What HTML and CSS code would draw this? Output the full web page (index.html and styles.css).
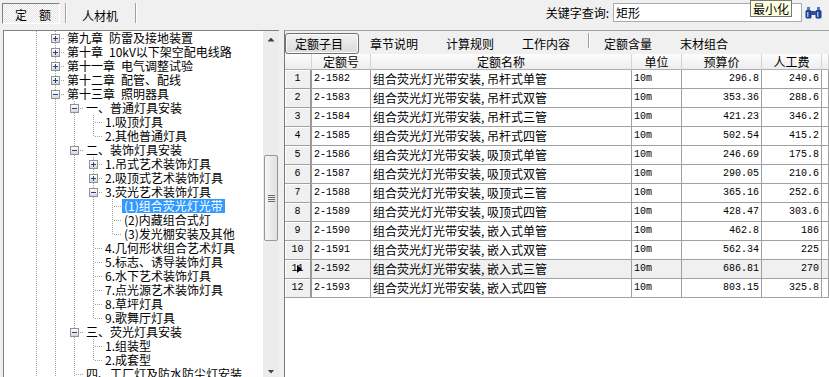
FILE: index.html
```html
<!DOCTYPE html>
<html lang="zh-CN">
<head>
  <meta charset="UTF-8">
  <meta name="viewport" content="width=device-width, initial-scale=1.0">
  <title>定额查询</title>
  <link rel="stylesheet" href="styles.css">
</head>
<body>

  <div class="toolbar">
    <div class="mode-tab">定　额</div>
    <div class="mode-sep"></div>
    <div class="mode-link">人材机</div>
    <div class="mode-sep last"></div>

    <label class="search-label" for="keyword">关键字查询:</label>
    <input class="search-box" id="keyword" type="text" value="矩形">
    <svg class="find-icon" width="17" height="12" viewBox="0 0 17 12">
      <path d="M2 0h3v3H2zM12 0h3v3h-3z" fill="#5577c4"/>
      <rect x="0.5" y="3" width="6" height="8.5" rx="1.5" fill="#21428f"/>
      <rect x="10.5" y="3" width="6" height="8.5" rx="1.5" fill="#21428f"/>
      <rect x="6" y="4" width="5" height="4" fill="#2d4f9e"/>
      <rect x="2" y="5" width="1.5" height="5" fill="#9db8ee"/>
      <rect x="12" y="5" width="1.5" height="5" fill="#9db8ee"/>
    </svg>
    <div class="tooltip">最小化</div>
  </div>

  <div class="main">
    <div class="tree-panel">
      <div class="tree">
        <div class="node"><i class="g v"></i><i class="g t"><b class="box plus"></b></i><span class="label">第九章&ensp;防雷及接地装置</span></div>
        <div class="node"><i class="g v"></i><i class="g t"><b class="box plus"></b></i><span class="label">第十章&ensp;10kV以下架空配电线路</span></div>
        <div class="node"><i class="g v"></i><i class="g t"><b class="box plus"></b></i><span class="label">第十一章&ensp;电气调整试验</span></div>
        <div class="node"><i class="g v"></i><i class="g t"><b class="box plus"></b></i><span class="label">第十二章&ensp;配管、配线</span></div>
        <div class="node"><i class="g v"></i><i class="g t"><b class="box"></b></i><span class="label">第十三章&ensp;照明器具</span></div>
        <div class="node"><i class="g v"></i><i class="g v"></i><i class="g t"><b class="box"></b></i><span class="label">一、普通灯具安装</span></div>
        <div class="node"><i class="g v"></i><i class="g v"></i><i class="g v"></i><i class="g t"></i><span class="label">1.吸顶灯具</span></div>
        <div class="node"><i class="g v"></i><i class="g v"></i><i class="g v"></i><i class="g e"></i><span class="label">2.其他普通灯具</span></div>
        <div class="node"><i class="g v"></i><i class="g v"></i><i class="g t"><b class="box"></b></i><span class="label">二、装饰灯具安装</span></div>
        <div class="node"><i class="g v"></i><i class="g v"></i><i class="g v"></i><i class="g t"><b class="box plus"></b></i><span class="label">1.吊式艺术装饰灯具</span></div>
        <div class="node"><i class="g v"></i><i class="g v"></i><i class="g v"></i><i class="g t"><b class="box plus"></b></i><span class="label">2.吸顶式艺术装饰灯具</span></div>
        <div class="node"><i class="g v"></i><i class="g v"></i><i class="g v"></i><i class="g t"><b class="box"></b></i><span class="label">3.荧光艺术装饰灯具</span></div>
        <div class="node"><i class="g v"></i><i class="g v"></i><i class="g v"></i><i class="g v"></i><i class="g t"></i><span class="label sel">(1)组合荧光灯光带</span></div>
        <div class="node"><i class="g v"></i><i class="g v"></i><i class="g v"></i><i class="g v"></i><i class="g t"></i><span class="label">(2)内藏组合式灯</span></div>
        <div class="node"><i class="g v"></i><i class="g v"></i><i class="g v"></i><i class="g v"></i><i class="g e"></i><span class="label">(3)发光棚安装及其他</span></div>
        <div class="node"><i class="g v"></i><i class="g v"></i><i class="g v"></i><i class="g t"></i><span class="label">4.几何形状组合艺术灯具</span></div>
        <div class="node"><i class="g v"></i><i class="g v"></i><i class="g v"></i><i class="g t"></i><span class="label">5.标志、诱导装饰灯具</span></div>
        <div class="node"><i class="g v"></i><i class="g v"></i><i class="g v"></i><i class="g t"></i><span class="label">6.水下艺术装饰灯具</span></div>
        <div class="node"><i class="g v"></i><i class="g v"></i><i class="g v"></i><i class="g t"></i><span class="label">7.点光源艺术装饰灯具</span></div>
        <div class="node"><i class="g v"></i><i class="g v"></i><i class="g v"></i><i class="g t"></i><span class="label">8.草坪灯具</span></div>
        <div class="node"><i class="g v"></i><i class="g v"></i><i class="g v"></i><i class="g e"></i><span class="label">9.歌舞厅灯具</span></div>
        <div class="node"><i class="g v"></i><i class="g v"></i><i class="g t"><b class="box"></b></i><span class="label">三、荧光灯具安装</span></div>
        <div class="node"><i class="g v"></i><i class="g v"></i><i class="g v"></i><i class="g t"></i><span class="label">1.组装型</span></div>
        <div class="node"><i class="g v"></i><i class="g v"></i><i class="g v"></i><i class="g e"></i><span class="label">2.成套型</span></div>
        <div class="node"><i class="g v"></i><i class="g v"></i><i class="g t"></i><span class="label">四、工厂灯及防水防尘灯安装</span></div>
      </div>

      <div class="vscroll">
        <div class="sb-btn"><span class="tri up"></span></div>
        <div class="sb-track">
          <div class="sb-thumb"><span class="sb-grip"></span></div>
        </div>
        <div class="sb-btn"><span class="tri down"></span></div>
      </div>
    </div>

    <div class="grid-panel">
      <div class="subtabs">
        <div class="subtab on">定额子目</div>
        <div class="subtab">章节说明</div>
        <div class="subtab">计算规则</div>
        <div class="subtab">工作内容</div>
        <div class="subtab-sep"></div>
        <div class="subtab">定额含量</div>
        <div class="subtab">末材组合</div>
      </div>

      <div class="grid">
        <div class="grid-head">
          <div></div><div>定额号</div><div>定额名称</div><div>单位</div><div>预算价</div><div>人工费</div><div></div>
        </div>
        <div class="grid-row"><div class="rn">1</div><div class="mono">2-1582</div><div>组合荧光灯光带安装, 吊杆式单管</div><div class="mono">10m</div><div class="mono num">296.8</div><div class="mono num">240.6</div><div></div></div>
        <div class="grid-row"><div class="rn">2</div><div class="mono">2-1583</div><div>组合荧光灯光带安装, 吊杆式双管</div><div class="mono">10m</div><div class="mono num">353.36</div><div class="mono num">288.6</div><div></div></div>
        <div class="grid-row"><div class="rn">3</div><div class="mono">2-1584</div><div>组合荧光灯光带安装, 吊杆式三管</div><div class="mono">10m</div><div class="mono num">421.23</div><div class="mono num">346.2</div><div></div></div>
        <div class="grid-row"><div class="rn">4</div><div class="mono">2-1585</div><div>组合荧光灯光带安装, 吊杆式四管</div><div class="mono">10m</div><div class="mono num">502.54</div><div class="mono num">415.2</div><div></div></div>
        <div class="grid-row"><div class="rn">5</div><div class="mono">2-1586</div><div>组合荧光灯光带安装, 吸顶式单管</div><div class="mono">10m</div><div class="mono num">246.69</div><div class="mono num">175.8</div><div></div></div>
        <div class="grid-row"><div class="rn">6</div><div class="mono">2-1587</div><div>组合荧光灯光带安装, 吸顶式双管</div><div class="mono">10m</div><div class="mono num">290.05</div><div class="mono num">210.6</div><div></div></div>
        <div class="grid-row"><div class="rn">7</div><div class="mono">2-1588</div><div>组合荧光灯光带安装, 吸顶式三管</div><div class="mono">10m</div><div class="mono num">365.16</div><div class="mono num">252.6</div><div></div></div>
        <div class="grid-row"><div class="rn">8</div><div class="mono">2-1589</div><div>组合荧光灯光带安装, 吸顶式四管</div><div class="mono">10m</div><div class="mono num">428.47</div><div class="mono num">303.6</div><div></div></div>
        <div class="grid-row"><div class="rn">9</div><div class="mono">2-1590</div><div>组合荧光灯光带安装, 嵌入式单管</div><div class="mono">10m</div><div class="mono num">462.8</div><div class="mono num">186</div><div></div></div>
        <div class="grid-row"><div class="rn">10</div><div class="mono">2-1591</div><div>组合荧光灯光带安装, 嵌入式双管</div><div class="mono">10m</div><div class="mono num">562.34</div><div class="mono num">225</div><div></div></div>
        <div class="grid-row current"><div class="rn mark">11</div><div class="mono">2-1592</div><div>组合荧光灯光带安装, 嵌入式三管</div><div class="mono">10m</div><div class="mono num">686.81</div><div class="mono num">270</div><div></div></div>
        <div class="grid-row"><div class="rn">12</div><div class="mono">2-1593</div><div>组合荧光灯光带安装, 嵌入式四管</div><div class="mono">10m</div><div class="mono num">803.15</div><div class="mono num">325.8</div><div></div></div>
      </div>
    </div>
  </div>

</body>
</html>
```

FILE: styles.css
```css
* {
  box-sizing: border-box;
}

html, body {
  height: 100%;
  overflow: hidden;
}

body {
  margin: 0;
  background: #f0f0f0;
  color: #000;
  font-family: "Noto Sans CJK SC", "Liberation Sans", sans-serif;
  font-size: 12px;
}

/* top bar */
.toolbar {
  position: relative;
  display: flex;
  align-items: flex-start;
  height: 30px;
  padding: 3px 7px 0 2px;
}

.mode-tab {
  width: 58px;
  height: 21px;
  padding: 2px 0 0 12px;
  line-height: 17px;
  border: 1px solid;
  border-color: #808080 #fff #fff #808080;
  background: repeating-conic-gradient(#fff 0 25%, #e4e4e4 0 50%) 0 0 / 2px 2px;
}

.mode-sep {
  width: 2px;
  height: 20px;
  margin-left: 5px;
  border-left: 1px solid #a0a0a0;
  border-right: 1px solid #fff;
}

.mode-sep.last {
  margin-left: 17px;
}

.mode-link {
  margin-left: 15px;
  padding-top: 2px;
  line-height: 21px;
}

.search-label {
  margin-left: auto;
  margin-right: 4px;
  line-height: 19px;
}

.search-box {
  width: 189px;
  height: 19px;
  margin: 0;
  padding: 0 2px;
  border: 1px solid #a5acb5;
  background: #fff;
  font: inherit;
  line-height: 17px;
  outline: none;
}

.find-icon {
  margin: 4px 0 0 3px;
}

.tooltip {
  position: absolute;
  left: 750px;
  top: 0;
  width: 42px;
  height: 17px;
  border: 1px solid #767676;
  background: #ffffe1;
  line-height: 15px;
  text-align: center;
}

/* panels */
.main {
  display: flex;
  height: 350px;
}

.tree-panel {
  display: flex;
  width: 276px;
  margin-left: 3px;
  border-top: 1px solid #828282;
  border-left: 1px solid #828282;
  background: #fff;
}

.tree {
  flex: 1;
  overflow: hidden;
  padding-left: 23px;
}

.node {
  display: flex;
  height: 14px;
  white-space: nowrap;
}

.g {
  flex: none;
  display: flex;
  justify-content: center;
  align-items: flex-start;
  width: 19px;
  height: 14px;
  background-repeat: no-repeat;
}

.g.v {
  background-image: repeating-linear-gradient(#a0a0a0 0 1px, transparent 1px 2px);
  background-position: 9px 0;
  background-size: 1px 100%;
}

.g.t {
  background-image: repeating-linear-gradient(#a0a0a0 0 1px, transparent 1px 2px),
                    repeating-linear-gradient(90deg, #a0a0a0 0 1px, transparent 1px 2px);
  background-position: 9px 0, 11px 7px;
  background-size: 1px 100%, 8px 1px;
}

.g.e {
  background-image: repeating-linear-gradient(#a0a0a0 0 1px, transparent 1px 2px),
                    repeating-linear-gradient(90deg, #a0a0a0 0 1px, transparent 1px 2px);
  background-position: 9px 0, 11px 7px;
  background-size: 1px 8px, 8px 1px;
}

.box {
  width: 9px;
  height: 9px;
  margin-top: 3px;
  border: 1px solid #919191;
  background: linear-gradient(#23418f, #23418f) center / 5px 1px no-repeat,
              linear-gradient(#fff, #d6d6d6);
}

.box.plus {
  background: linear-gradient(#23418f, #23418f) center / 5px 1px no-repeat,
              linear-gradient(#23418f, #23418f) center / 1px 5px no-repeat,
              linear-gradient(#fff, #d6d6d6);
}

.label {
  padding: 0 2px;
  line-height: 14px;
}

.label.sel {
  background: #3399ff;
  color: #fff;
}

/* fake scrollbar */
.vscroll {
  flex: none;
  display: flex;
  flex-direction: column;
  width: 16px;
  background: #ececec;
}

.sb-btn {
  flex: none;
  display: flex;
  justify-content: center;
  align-items: center;
  height: 17px;
}

.tri {
  width: 7px;
  height: 4px;
  background: #404040;
}

.tri.up {
  clip-path: polygon(50% 0, 100% 100%, 0 100%);
}

.tri.down {
  clip-path: polygon(0 0, 100% 0, 50% 100%);
}

.sb-track {
  flex: 1;
  padding-top: 107px;
}

.sb-thumb {
  display: flex;
  justify-content: center;
  align-items: center;
  height: 86px;
  margin: 0 1px;
  border: 1px solid #979797;
  border-radius: 2px;
  background: linear-gradient(90deg, #f6f6f6, #e0e0e0);
}

.sb-grip {
  width: 7px;
  height: 7px;
  background: repeating-linear-gradient(#6b6b6b 0 1px, transparent 1px 2px);
}

/* right side */
.grid-panel {
  flex: 1;
  display: flex;
  flex-direction: column;
  margin-left: 5px;
  border-top: 1px solid #a0a0a0;
  border-left: 1px solid #7a7a7a;
}

.subtabs {
  flex: none;
  display: flex;
  align-items: flex-start;
  height: 23px;
}

.subtab {
  margin: 2px 0 0 28px;
  line-height: 21px;
}

.subtab.on {
  width: 74px;
  height: 21px;
  margin-left: 0;
  padding-left: 9px;
  border: 1px solid #707070;
  border-radius: 3px;
  background: linear-gradient(#f2f2f2, #dadada);
  box-shadow: inset 0 0 0 1px #fafafa;
  line-height: 19px;
}

.subtab.on + .subtab {
  margin-left: 11px;
}

.subtab-sep {
  width: 2px;
  height: 15px;
  margin: 2px 0 0 18px;
  border-left: 1px solid #a0a0a0;
  border-right: 1px solid #fff;
}

.subtab-sep + .subtab {
  margin-left: 14px;
}

.grid {
  flex: 1;
  background: #fff;
}

.grid-head,
.grid-row {
  display: grid;
  grid-template-columns: 27px 59px 261px 50px 80px 60px 1fr;
}

.grid-head {
  height: 16px;
}

.grid-head > div {
  border-right: 1px solid #d5d5d5;
  border-bottom: 1px solid #b0b0b0;
  background: linear-gradient(#fdfdfd, #ededed);
  line-height: 15px;
  text-align: center;
}

.grid-row {
  height: 19px;
}

.grid-row > div {
  overflow: hidden;
  padding: 0 2px;
  border-right: 1px solid #a0a0a0;
  border-bottom: 1px solid #a0a0a0;
  line-height: 18px;
  white-space: nowrap;
}

.grid-row.current > div {
  background: #f0f0f0;
}

.grid-row .rn {
  position: relative;
  border-right: 2px solid #9a9a9a;
  background: #f0f0f0;
  box-shadow: inset 1px 1px #fff;
  font-family: "Liberation Mono", monospace;
  font-size: 10px;
  text-align: center;
}

.rn.mark::after {
  content: "";
  position: absolute;
  left: 12px;
  top: 5px;
  width: 5px;
  height: 8px;
  background: #000;
  clip-path: polygon(0 0, 100% 50%, 0 100%);
}

.mono {
  font-family: "Liberation Mono", monospace;
  font-size: 10px;
}

.num {
  text-align: right;
}
```
